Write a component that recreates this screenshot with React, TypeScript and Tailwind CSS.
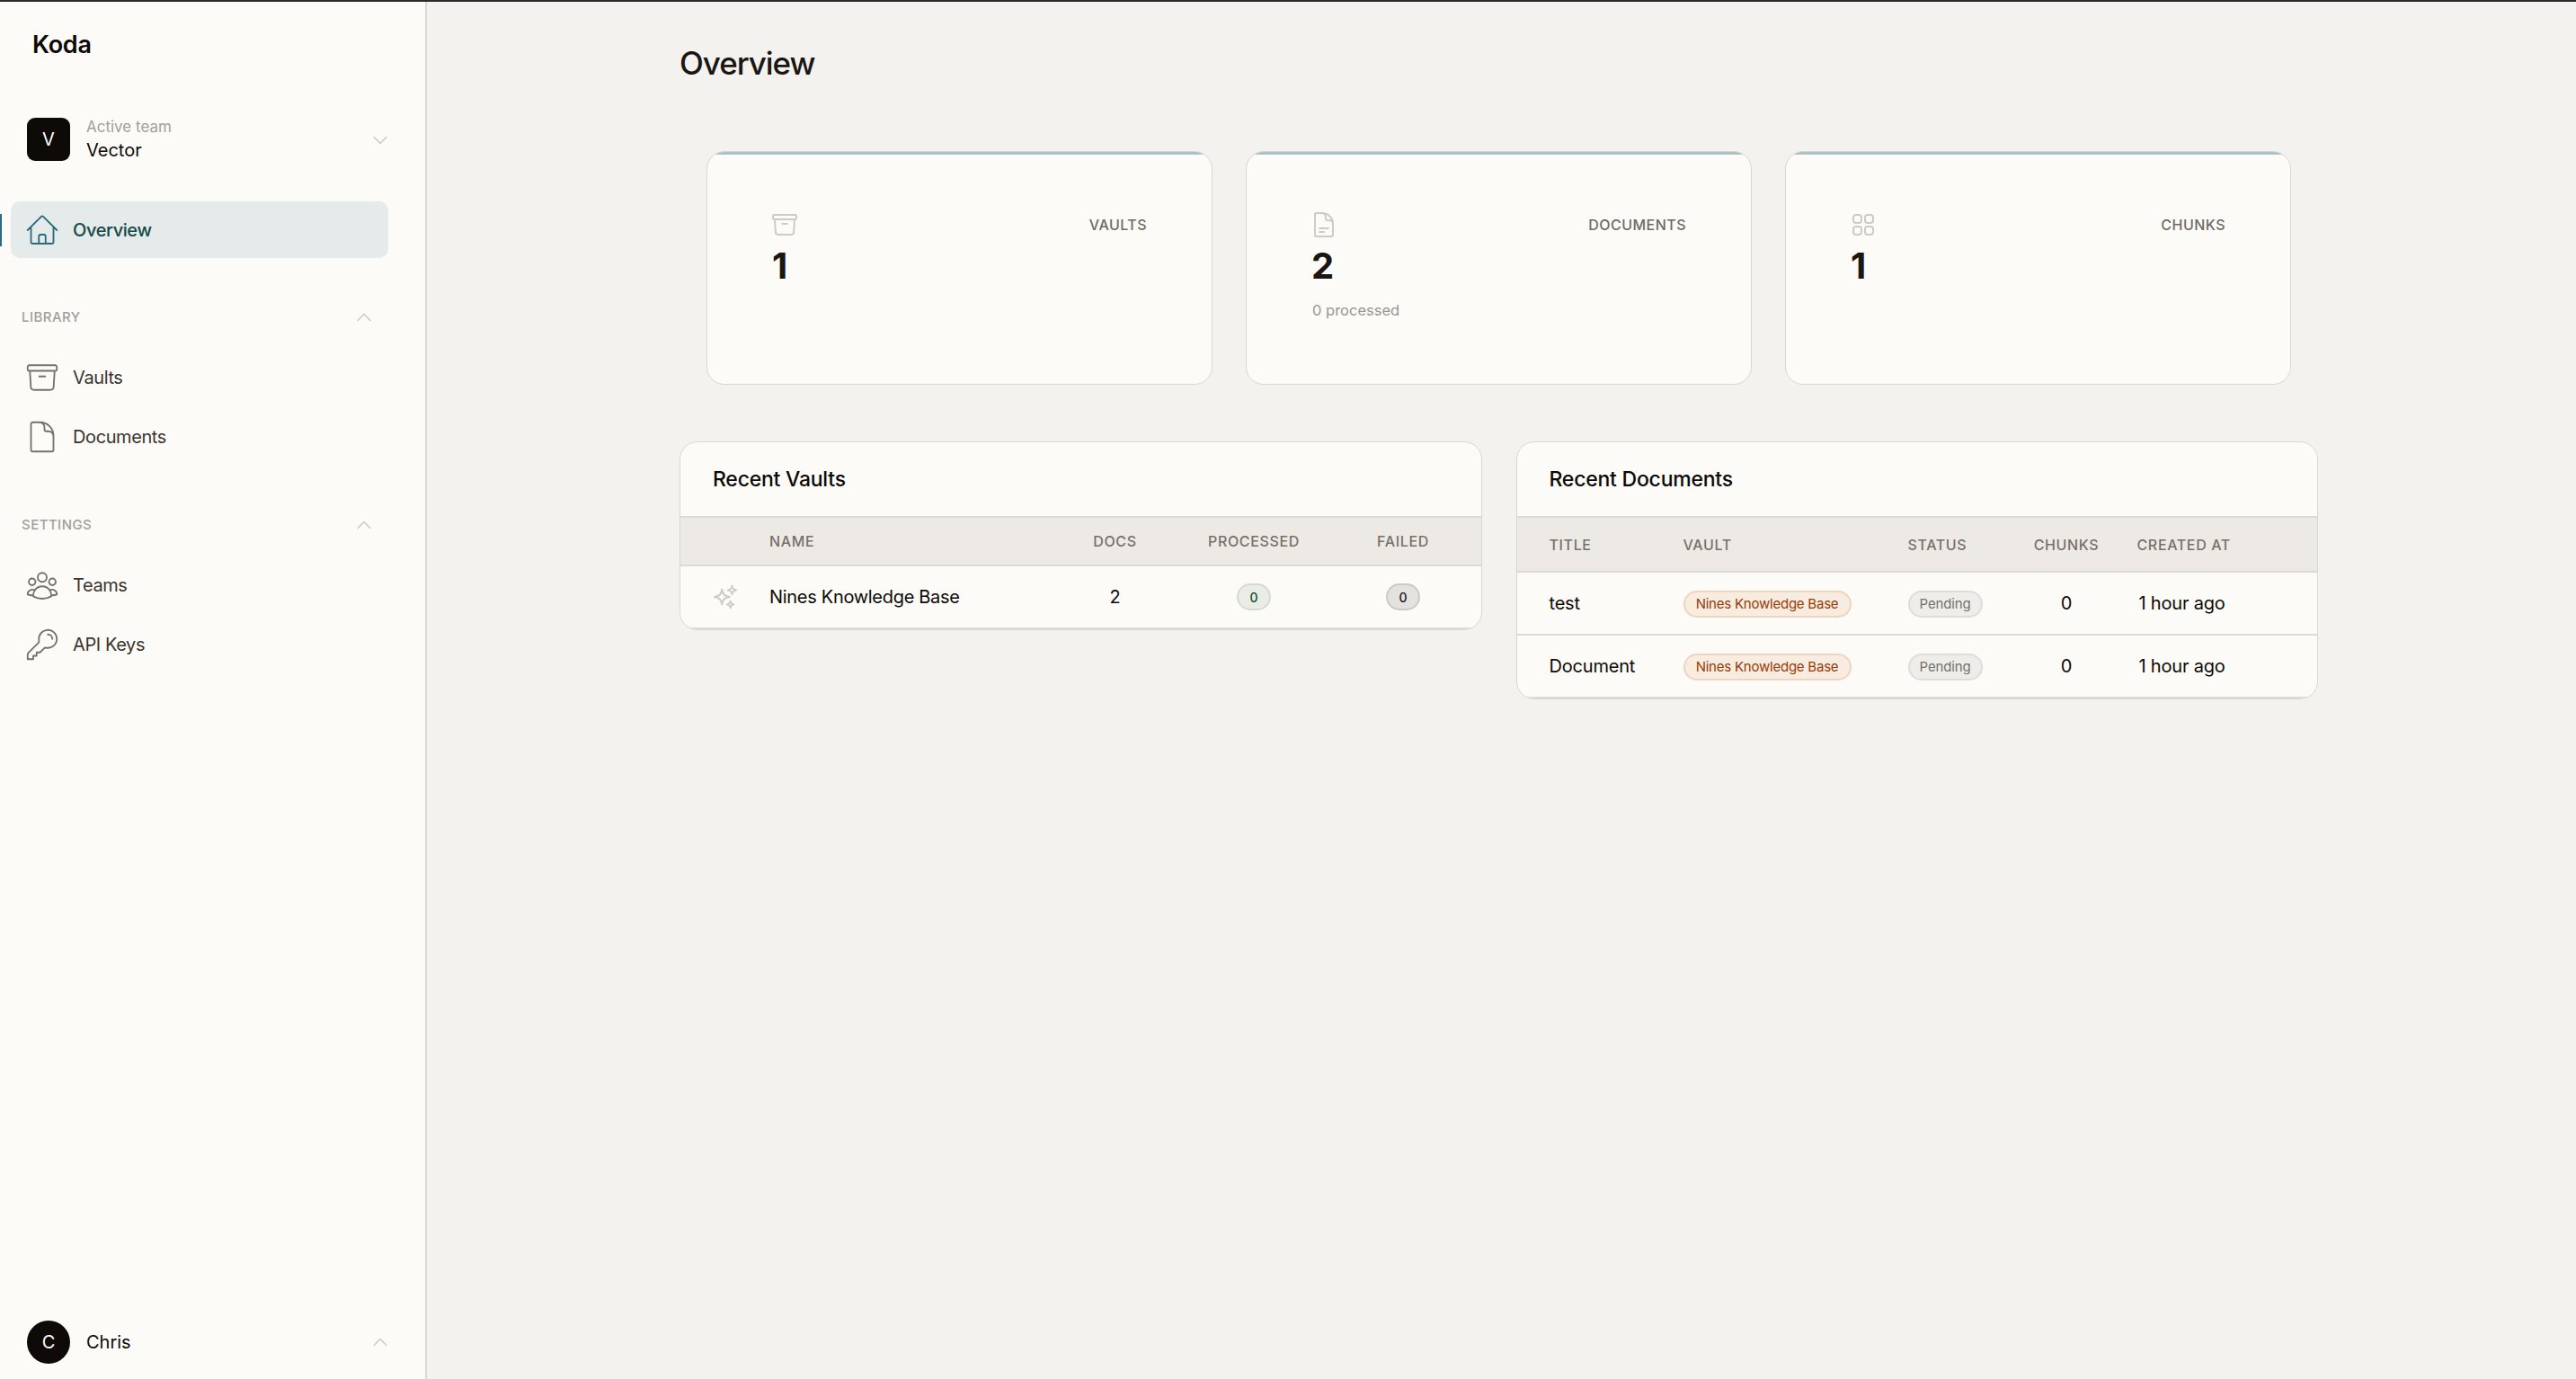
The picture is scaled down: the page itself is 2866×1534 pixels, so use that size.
import {
  HiOutlineArchiveBox,
  HiOutlineChevronDown,
  HiOutlineChevronUp,
  HiOutlineDocument,
  HiOutlineDocumentText,
  HiOutlineHome,
  HiOutlineKey,
  HiOutlineSparkles,
  HiOutlineSquares2X2,
  HiOutlineUserGroup,
} from 'react-icons/hi2';
import type { ComponentType, ReactNode } from 'react';

type IconType = ComponentType<{ className?: string }>;

function NavItem({ icon: Icon, label }: { icon: IconType; label: string }) {
  return (
    <div className="flex h-[66px] items-center gap-[14px] pl-[27px]">
      <Icon className="h-10 w-10 text-[#75716b] [&_path]:stroke-[1.1]" />
      <span className="text-[20px] tracking-[-0.02em] text-[#3a352f]">{label}</span>
    </div>
  );
}

function SectionLabel({ label }: { label: string }) {
  return (
    <div className="flex h-5 items-center justify-between pl-6 pr-[57px]">
      <span className="text-[15px] font-medium tracking-[0.03em] text-[#a3a09a]">{label}</span>
      <HiOutlineChevronUp className="h-[22px] w-[22px] text-[#c9c7c2]" />
    </div>
  );
}

function StatCard({ icon: Icon, label, value, note }: { icon: IconType; label: string; value: string; note?: string }) {
  return (
    <div className="h-[260px] overflow-hidden rounded-[20px] border border-[#d9d7d1] bg-[#fcfbf7]">
      <div className="h-[3px] bg-[#a9c0c7]" />
      <div className="pl-[73px] pr-[72px] pt-[62px]">
        <div className="flex h-8 items-center justify-between">
          <Icon className="-ml-[3px] h-8 w-8 text-[#cdcbc6]" />
          <span className="text-[16px] font-medium tracking-[0.03em] text-[#6e6a65]">{label}</span>
        </div>
        <div className="mt-2 -ml-px text-[40px] leading-[44px] font-bold text-[#1a1613]">{value}</div>
        {note && <div className="mt-[15px] text-[16.5px] leading-6 text-[#9a9690]">{note}</div>}
      </div>
    </div>
  );
}

function TableCard({ title, children }: { title: string; children: ReactNode }) {
  return (
    <div className="self-start overflow-hidden rounded-[20px] border border-[#d9d7d1] bg-[#fcfbf7]">
      <div className="flex h-[82px] items-center pl-9 text-[23px] font-medium tracking-[-0.01em] text-[#0d0a07]">{title}</div>
      {children}
    </div>
  );
}

function Badge({ className, children }: { className: string; children: ReactNode }) {
  return (
    <span className={`inline-flex h-[30px] items-center justify-center rounded-full border-2 ${className}`}>
      {children}
    </span>
  );
}

const headCell = 'text-[16px] font-medium tracking-[0.04em] text-[#75716b]';
const docHeadGrid =
  'grid h-[63px] grid-cols-[185px_250px_130px_93px_1fr] items-center border-y-2 border-[#dcdad4] bg-[#edeae5]';
const docRowGrid =
  'grid h-[70px] grid-cols-[185px_250px_130px_93px_1fr] items-center border-b-2 border-[#dcdad4] text-[20px] tracking-[-0.01em] text-[#0d0a07]';

const documents = ['test', 'Document'];

export default function App() {
  return (
    <div className="flex h-screen flex-col overflow-hidden bg-[#f3f2ee] font-['Inter',sans-serif]">
      <div className="h-0.5 shrink-0 bg-[#2b2b2b]" />
      <div className="flex min-h-0 flex-1">
        <aside className="flex w-[475px] shrink-0 flex-col border-r-2 border-[#dcdad4] bg-[#fcfbf7]">
          <div className="pl-9 pt-[31px] text-[27px] leading-[34px] font-semibold tracking-[-0.01em] text-[#0d0a07]">Koda</div>

          <div className="mt-16 flex h-12 items-center pl-[30px] pr-[39px]">
            <div className="flex h-12 w-12 items-center justify-center rounded-[9px] bg-[#0d0a07] text-[20px] text-white">V</div>
            <div className="ml-[18px] flex-1">
              <div className="text-[17px] leading-[22px] text-[#a3a09a]">Active team</div>
              <div className="mt-[2px] text-[20px] leading-[26px] text-[#0d0a07]">Vector</div>
            </div>
            <HiOutlineChevronDown className="mt-px h-[22px] w-[22px] text-[#c9c7c2]" />
          </div>

          <div className="relative mt-[45px]">
            <span className="absolute left-0 top-[14px] h-9 w-0.5 bg-[#2a6b7f]" />
            <div className="ml-3 flex h-[63px] w-[420px] items-center gap-[14px] rounded-[10px] bg-[#e5eaea] pl-[15px]">
              <HiOutlineHome className="h-10 w-10 text-[#2a6b7f] [&_path]:stroke-[1.1]" />
              <span className="text-[20px] font-medium tracking-[-0.02em] text-[#134a46]">Overview</span>
            </div>
          </div>

          <div className="mt-14">
            <SectionLabel label="LIBRARY" />
          </div>
          <div className="mt-6">
            <NavItem icon={HiOutlineArchiveBox} label="Vaults" />
            <NavItem icon={HiOutlineDocument} label="Documents" />
          </div>

          <div className="mt-[55px]">
            <SectionLabel label="SETTINGS" />
          </div>
          <div className="mt-6">
            <NavItem icon={HiOutlineUserGroup} label="Teams" />
            <NavItem icon={HiOutlineKey} label="API Keys" />
          </div>

          <div className="mt-auto flex items-center pb-[17px] pl-[30px] pr-[39px]">
            <div className="flex h-12 w-12 items-center justify-center rounded-full bg-[#0d0a07] text-[20px] text-white">C</div>
            <div className="ml-[18px] flex-1 text-[20px] text-[#0d0a07]">Chris</div>
            <HiOutlineChevronUp className="h-[22px] w-[22px] text-[#c9c7c2]" />
          </div>
        </aside>

        <main className="min-w-0 flex-1 pl-[281px] pt-[46px]">
          <div className="w-[1823px]">
            <h1 className="text-[35px] leading-[44px] font-medium tracking-[-0.03em] text-[#1a1613]">Overview</h1>

            <div className="mx-[30px] mt-[76px] grid grid-cols-3 gap-[37px]">
              <StatCard icon={HiOutlineArchiveBox} label="VAULTS" value="1" />
              <StatCard icon={HiOutlineDocumentText} label="DOCUMENTS" value="2" note="0 processed" />
              <StatCard icon={HiOutlineSquares2X2} label="CHUNKS" value="1" />
            </div>

            <div className="mt-[63px] grid grid-cols-2 gap-[38px]">
              <TableCard title="Recent Vaults">
                <div className="grid h-14 grid-cols-[99px_334px_101px_208px_124px] items-center border-y-2 border-[#dcdad4] bg-[#edeae5]">
                  <span />
                  <span className={headCell}>NAME</span>
                  <span className={`${headCell} text-center`}>DOCS</span>
                  <span className={`${headCell} text-center`}>PROCESSED</span>
                  <span className={`${headCell} text-center`}>FAILED</span>
                </div>
                <div className="grid h-[70px] grid-cols-[99px_334px_101px_208px_124px] items-center border-b-2 border-[#dcdad4] text-[20px] text-[#0d0a07]">
                  <HiOutlineSparkles className="ml-[35px] h-[30px] w-[30px] text-[#cdcbc6]" />
                  <span className="tracking-[-0.015em]">Nines Knowledge Base</span>
                  <span className="text-center">2</span>
                  <span className="flex justify-center">
                    <Badge className="w-[38px] border-[#d6dbd2] bg-[#e9ede6] text-[14px] font-medium text-[#134a2e]">0</Badge>
                  </span>
                  <span className="flex justify-center">
                    <Badge className="w-[38px] border-[#cdcac6] bg-[#e4e2df] text-[14px] font-medium text-[#1a1613]">0</Badge>
                  </span>
                </div>
              </TableCard>

              <TableCard title="Recent Documents">
                <div className={docHeadGrid}>
                  <span className={`${headCell} pl-9`}>TITLE</span>
                  <span className={headCell}>VAULT</span>
                  <span className={headCell}>STATUS</span>
                  <span className={`${headCell} text-center`}>CHUNKS</span>
                  <span className={`${headCell} pl-[32px]`}>CREATED AT</span>
                </div>
                {documents.map((name) => (
                  <div key={name} className={docRowGrid}>
                    <span className="pl-9">{name}</span>
                    <span>
                      <Badge className="w-[187px] border-[#efd5bc] bg-[#f8ece1] text-[15px] tracking-[-0.015em] text-[#983c06]">Nines Knowledge Base</Badge>
                    </span>
                    <span>
                      <Badge className="w-[83px] border-[#dfddd8] bg-[#eeedea] text-[15px] tracking-[-0.01em] text-[#75716b]">Pending</Badge>
                    </span>
                    <span className="text-center">0</span>
                    <span className="pl-[34px]">1 hour ago</span>
                  </div>
                ))}
              </TableCard>
            </div>
          </div>
        </main>
      </div>
    </div>
  );
}
